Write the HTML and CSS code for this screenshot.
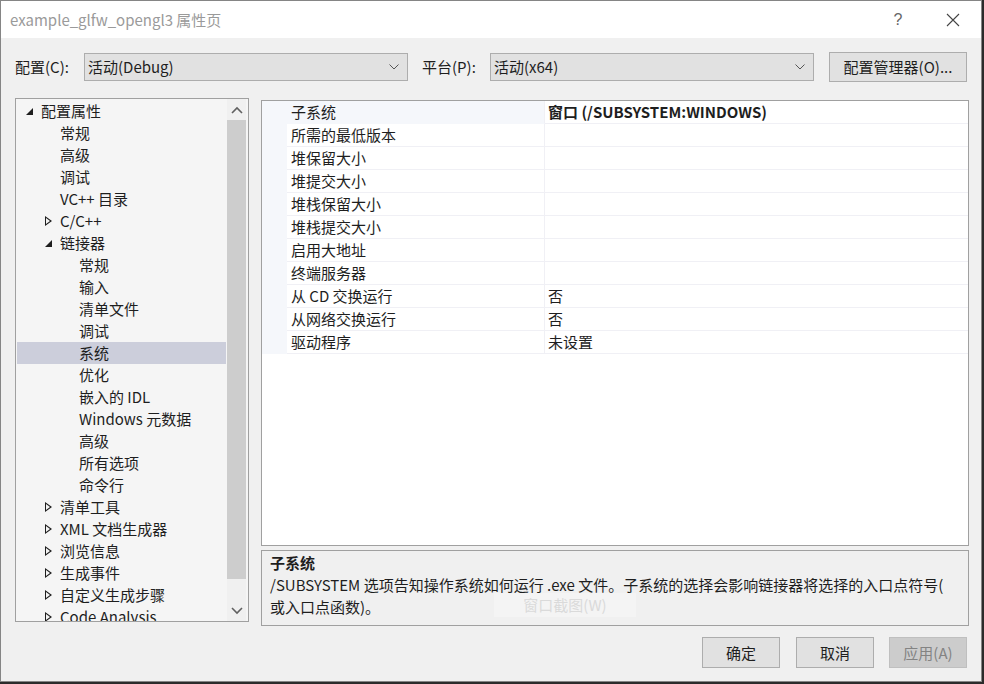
FILE: index.html
```html
<!DOCTYPE html>
<html lang="zh-CN">
<head>
    <meta charset="UTF-8">
    <title>example_glfw_opengl3 属性页</title>
    <link rel="stylesheet" href="styles.css">
</head>
<body>
    <div class="window">
        <div class="titlebar">
            <span class="title">example_glfw_opengl3 属性页</span>
            <span class="caption-help">?</span>
            <span class="caption-close">
                <svg width="14" height="14" viewBox="0 0 14 14"><path d="M1 1 L13 13 M13 1 L1 13" stroke="#444" stroke-width="1.1" fill="none"/></svg>
            </span>
        </div>

        <div class="toolbar">
            <label class="tb-label">配置(C):</label>
            <div class="combo">
                <span>活动(Debug)</span>
                <svg class="chev" width="10" height="6" viewBox="0 0 10 6"><path d="M0.5 0.5 L5 5 L9.5 0.5" stroke="#555" fill="none"/></svg>
            </div>
            <label class="tb-label second">平台(P):</label>
            <div class="combo">
                <span>活动(x64)</span>
                <svg class="chev" width="10" height="6" viewBox="0 0 10 6"><path d="M0.5 0.5 L5 5 L9.5 0.5" stroke="#555" fill="none"/></svg>
            </div>
            <button class="btn manager">配置管理器(O)...</button>
        </div>

        <div class="main">
            <div class="tree">
                <div class="tree-list">
                    <div class="node lv0"><span class="arrow open"></span>配置属性</div>
                    <div class="node lv1"><span class="arrow"></span>常规</div>
                    <div class="node lv1"><span class="arrow"></span>高级</div>
                    <div class="node lv1"><span class="arrow"></span>调试</div>
                    <div class="node lv1"><span class="arrow"></span>VC++ 目录</div>
                    <div class="node lv1"><span class="arrow closed"></span>C/C++</div>
                    <div class="node lv1"><span class="arrow open"></span>链接器</div>
                    <div class="node lv2"><span class="arrow"></span>常规</div>
                    <div class="node lv2"><span class="arrow"></span>输入</div>
                    <div class="node lv2"><span class="arrow"></span>清单文件</div>
                    <div class="node lv2"><span class="arrow"></span>调试</div>
                    <div class="node lv2 selected"><span class="arrow"></span>系统</div>
                    <div class="node lv2"><span class="arrow"></span>优化</div>
                    <div class="node lv2"><span class="arrow"></span>嵌入的 IDL</div>
                    <div class="node lv2"><span class="arrow"></span>Windows 元数据</div>
                    <div class="node lv2"><span class="arrow"></span>高级</div>
                    <div class="node lv2"><span class="arrow"></span>所有选项</div>
                    <div class="node lv2"><span class="arrow"></span>命令行</div>
                    <div class="node lv1"><span class="arrow closed"></span>清单工具</div>
                    <div class="node lv1"><span class="arrow closed"></span>XML 文档生成器</div>
                    <div class="node lv1"><span class="arrow closed"></span>浏览信息</div>
                    <div class="node lv1"><span class="arrow closed"></span>生成事件</div>
                    <div class="node lv1"><span class="arrow closed"></span>自定义生成步骤</div>
                    <div class="node lv1"><span class="arrow closed"></span>Code Analysis</div>
                </div>
                <div class="scrollbar">
                    <div class="sb-btn">
                        <svg width="12" height="8" viewBox="0 0 12 8"><path d="M1 7 L6 2 L11 7" stroke="#606060" stroke-width="1.6" fill="none"/></svg>
                    </div>
                    <div class="sb-thumb"></div>
                    <div class="sb-track"></div>
                    <div class="sb-btn">
                        <svg width="12" height="8" viewBox="0 0 12 8"><path d="M1 1 L6 6 L11 1" stroke="#606060" stroke-width="1.6" fill="none"/></svg>
                    </div>
                </div>
            </div>

            <div class="right">
                <div class="grid">
                    <div class="prow first">
                        <div class="gutter"></div>
                        <div class="pname">子系统</div>
                        <div class="pvalue bold">窗口 (/SUBSYSTEM:WINDOWS)</div>
                    </div>
                    <div class="prow"><div class="gutter"></div><div class="pname">所需的最低版本</div><div class="pvalue"></div></div>
                    <div class="prow"><div class="gutter"></div><div class="pname">堆保留大小</div><div class="pvalue"></div></div>
                    <div class="prow"><div class="gutter"></div><div class="pname">堆提交大小</div><div class="pvalue"></div></div>
                    <div class="prow"><div class="gutter"></div><div class="pname">堆栈保留大小</div><div class="pvalue"></div></div>
                    <div class="prow"><div class="gutter"></div><div class="pname">堆栈提交大小</div><div class="pvalue"></div></div>
                    <div class="prow"><div class="gutter"></div><div class="pname">启用大地址</div><div class="pvalue"></div></div>
                    <div class="prow"><div class="gutter"></div><div class="pname">终端服务器</div><div class="pvalue"></div></div>
                    <div class="prow"><div class="gutter"></div><div class="pname">从 CD 交换运行</div><div class="pvalue">否</div></div>
                    <div class="prow"><div class="gutter"></div><div class="pname">从网络交换运行</div><div class="pvalue">否</div></div>
                    <div class="prow"><div class="gutter"></div><div class="pname">驱动程序</div><div class="pvalue">未设置</div></div>
                </div>
                <div class="desc">
                    <div class="desc-title">子系统</div>
                    <div class="desc-text">/SUBSYSTEM 选项告知操作系统如何运行 .exe 文件。子系统的选择会影响链接器将选择的入口点符号(<br>或入口点函数)。</div>
                    <div class="ghost">窗口截图(W)</div>
                </div>
            </div>
        </div>

        <div class="footer">
            <button class="btn action">确定</button>
            <button class="btn action">取消</button>
            <button class="btn action" disabled>应用(A)</button>
        </div>
    </div>
</body>
</html>
```

FILE: styles.css
```css
body {
    margin: 0;
    background-color: #2b2b2b;
    font-family: "Noto Sans CJK SC", "Liberation Sans", sans-serif;
    font-size: 15px;
    color: #1e1e1e;
}
.window {
    width: 980px;
    height: 680px;
    border: 1px solid #858585;
    background-color: #f0f0f0;
    display: flex;
    flex-direction: column;
}
.titlebar {
    height: 37px;
    background-color: #ffffff;
    display: flex;
    align-items: center;
}
.title {
    margin-left: 9px;
    color: #9a9a9a;
    flex: 1;
    line-height: 20px;
}
.caption-help {
    width: 20px;
    text-align: center;
    color: #666;
    font-family: "Liberation Sans", sans-serif;
    font-size: 16px;
    margin-right: 38px;
}
.caption-close {
    width: 14px;
    height: 14px;
    margin-right: 21px;
    display: flex;
}
.toolbar {
    margin-top: 14px;
    height: 30px;
    padding-left: 14px;
    display: flex;
    align-items: center;
}
.tb-label {
    width: 69px;
    line-height: 20px;
}
.tb-label.second {
    width: 68px;
    margin-left: 14px;
}
.combo {
    width: 322px;
    height: 26px;
    border: 1px solid #adadad;
    background-color: #e1e1e1;
    display: flex;
    align-items: center;
    padding-left: 3px;
    box-sizing: content-box;
    margin-right: 0;
}
.combo span {
    flex: 1;
    line-height: 20px;
}
.combo .chev {
    margin-right: 8px;
}
.combo {
    width: 319px;
}
.btn {
    font-family: inherit;
    font-size: 15px;
    color: #1e1e1e;
    background-color: #e1e1e1;
    border: 1px solid #adadad;
    padding: 0;
    line-height: 20px;
}
.btn.manager {
    margin-left: 15px;
    width: 138px;
    height: 30px;
}
.main {
    margin-top: 16px;
    height: 528px;
    padding-left: 14px;
    display: flex;
    gap: 12px;
}
.tree {
    width: 232px;
    height: 522px;
    border: 1px solid #a0a0a0;
    background-color: #f5f5f5;
    display: flex;
    overflow: hidden;
}
.tree-list {
    flex: 1;
    padding: 1px 1px 0 1px;
    overflow: hidden;
}
.node {
    height: 22px;
    line-height: 22px;
    display: flex;
    align-items: center;
    white-space: nowrap;
}
.node.lv0 { padding-left: 8px; }
.node.lv1 { padding-left: 27px; }
.node.lv2 { padding-left: 46px; }
.node.selected {
    background-color: #cccedb;
}
.arrow {
    width: 16px;
    height: 22px;
    flex: none;
    position: relative;
}
.arrow.open::before {
    content: "";
    position: absolute;
    left: 1px;
    top: 8px;
    border-style: solid;
    border-width: 0 0 7px 7px;
    border-color: transparent transparent #1e1e1e transparent;
}
.arrow.closed::before {
    content: "";
    position: absolute;
    left: 1px;
    top: 6px;
    border-style: solid;
    border-width: 5px 0 5px 7px;
    border-color: transparent transparent transparent #1e1e1e;
}
.arrow.closed::after {
    content: "";
    position: absolute;
    left: 2px;
    top: 8px;
    border-style: solid;
    border-width: 3px 0 3px 4px;
    border-color: transparent transparent transparent #f5f5f5;
}
.node.selected .arrow.closed::after {
    border-left-color: #cccedb;
}
.scrollbar {
    width: 19px;
    margin-right: 2px;
    background-color: #f0f0f0;
    display: flex;
    flex-direction: column;
}
.sb-btn {
    height: 21px;
    display: flex;
    align-items: center;
    justify-content: center;
}
.sb-thumb {
    height: 459px;
    background-color: #cdcdcd;
}
.sb-track {
    flex: 1;
}
.right {
    width: 708px;
    padding-top: 2px;
    display: flex;
    flex-direction: column;
    gap: 4px;
}
.grid {
    height: 445px;
    border: 1px solid #a0a0a0;
    background-color: #ffffff;
}
.prow {
    display: grid;
    grid-template-columns: 25px 258px 1fr;
    height: 23px;
}
.gutter {
    background-color: #f5f7fb;
}
.pname,
.pvalue {
    line-height: 22px;
    height: 22px;
    border-bottom: 1px solid #f0f0f5;
    white-space: nowrap;
}
.pname {
    padding-left: 4px;
    border-right: 1px solid #f0f0f5;
}
.pvalue {
    padding-left: 3px;
}
.pvalue.bold {
    font-weight: bold;
}
.prow.first .pname {
    background-color: #f5f7fb;
    border-bottom-color: #f5f7fb;
}
.desc {
    height: 73px;
    border: 1px solid #a0a0a0;
    background-color: #f0f0f0;
    padding: 1px 8px 0 8px;
    position: relative;
    overflow: hidden;
}
.desc-title {
    font-weight: bold;
    line-height: 22px;
}
.desc-text {
    line-height: 22px;
    white-space: nowrap;
    margin-top: 0;
}
.ghost {
    position: absolute;
    left: 232px;
    top: 42px;
    width: 142px;
    height: 24px;
    line-height: 24px;
    background-color: rgba(246, 246, 246, 0.6);
    color: #dadada;
    text-align: center;
}
.footer {
    margin-top: 11px;
    padding-right: 14px;
    display: flex;
    justify-content: flex-end;
}
.btn.action {
    width: 78px;
    height: 31px;
    margin-left: 16px;
}
.btn.action:last-child {
    margin-left: 15px;
}
.btn:disabled {
    background-color: #cccccc;
    border-color: #bfbfbf;
    color: #838383;
}
```
